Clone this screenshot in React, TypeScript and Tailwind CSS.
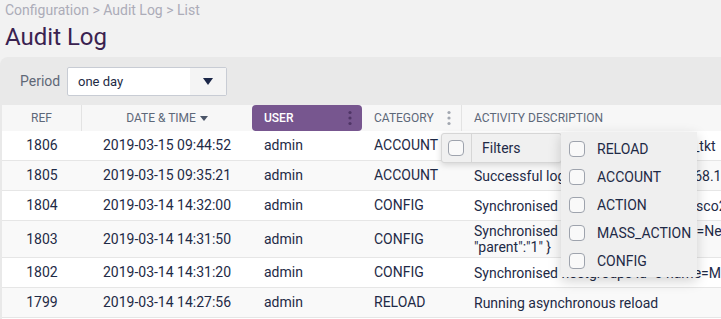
import React from "react";

const rows = [
    { ref: "1806", date: "2019-03-15 09:44:52", user: "admin", cat: "ACCOUNT", desc: ["Successful login for user admin vm_tkt"], h: "h-[30px]" },
    { ref: "1805", date: "2019-03-15 09:35:21", user: "admin", cat: "ACCOUNT", desc: ["Successful login for admin at 192.168.1.20"], h: "h-[30px]" },
    { ref: "1804", date: "2019-03-14 14:32:00", user: "admin", cat: "CONFIG", desc: ["Synchronised servers id=2 name=Cisco2"], h: "h-[30px]" },
    { ref: "1803", date: "2019-03-14 14:31:50", user: "admin", cat: "CONFIG", desc: ["Synchronised hostgroup id=4, name=New", "\"parent\":\"1\" }"], h: "h-[37px]" },
    { ref: "1802", date: "2019-03-14 14:31:20", user: "admin", cat: "CONFIG", desc: ["Synchronised hostgroups id=3 name=Main"], h: "h-[30px]" },
    { ref: "1799", date: "2019-03-14 14:27:56", user: "admin", cat: "RELOAD", desc: ["Running asynchronous reload"], h: "h-[30px]" },
];

const filterItems = ["RELOAD", "ACCOUNT", "ACTION", "MASS_ACTION", "CONFIG"];

function Kebab({ color }: { color: string }) {
    return (
        <svg width="4" height="16" viewBox="0 0 4 16" className={color}>
            <circle cx="2" cy="2.5" r="1.6" fill="currentColor" />
            <circle cx="2" cy="8" r="1.6" fill="currentColor" />
            <circle cx="2" cy="13.5" r="1.6" fill="currentColor" />
        </svg>
    );
}

function Box() {
    return <div className="w-[16px] h-[16px] rounded-[4px] border border-[#9ea3ad] bg-[#f9f9f9] shrink-0" />;
}

export default function App() {
    return (
        <div className="w-[721px] h-[319px] overflow-hidden bg-[#f2f2f2] font-['Roboto',sans-serif] relative">
            {/* Header */}
            <div className="pl-[5px] pt-[1px] text-[14px] leading-[18px] text-[#acacb8]">
                Configuration &gt; Audit Log &gt; List
            </div>
            <h1 className="pl-[5px] mt-[3px] text-[24px] leading-[30px] text-[#3a2250]">Audit Log</h1>

            {/* Panel */}
            <div className="mt-[5px] bg-[#e9e9e9] rounded-tl-[8px] h-[262px] flex flex-col">
                <div className="flex items-center h-[28px] mt-[10px] pl-[20px]">
                    <span className="text-[14px] text-[#5f6877] w-[47px]">Period</span>
                    <div className="flex w-[160px] h-[29px] border border-[#c8ccd4] rounded-[2px] bg-white">
                        <span className="flex-1 pl-[10px] text-[13px] text-[#1e2a44] leading-[27px]">one day</span>
                        <div className="w-[36px] bg-[#f4f4f4] flex items-center justify-center">
                            <svg width="10" height="7" viewBox="0 0 10 7"><path d="M0 0h10L5 7z" fill="#1b2748" /></svg>
                        </div>
                    </div>
                </div>

                {/* Table */}
                <div className="mt-[10px] ml-[2px] flex-1 bg-white overflow-hidden">
                    <div className="flex h-[26px] bg-[#f7f7f7] text-[12px] text-[#5d6879] uppercase">
                        <div className="w-[80px] shrink-0 border-r border-[#e3e3e3] flex items-center justify-center">REF</div>
                        <div className="w-[170px] shrink-0 flex items-center justify-center gap-[4px]">
                            DATE &amp; TIME
                            <svg width="8" height="5" viewBox="0 0 8 5"><path d="M0 0h8L4 5z" fill="#4b5568" /></svg>
                        </div>
                        <div className="w-[110px] shrink-0 bg-[#77568f] rounded-[4px] flex items-center justify-between pl-[12px] pr-[10px] text-white font-medium">
                            USER
                            <Kebab color="text-[#4f3566]" />
                        </div>
                        <div className="w-[100px] shrink-0 border-r border-[#e3e3e3] flex items-center justify-between pl-[12px] pr-[10px]">
                            CATEGORY
                            <Kebab color="text-[#a2a7b0]" />
                        </div>
                        <div className="flex-1 min-w-0 flex items-center pl-[12px] whitespace-nowrap">ACTIVITY DESCRIPTION</div>
                    </div>

                    {rows.map((r, i) => (
                        <div
                            key={r.ref}
                            className={`flex ${r.h} border-b border-[#e6e6e6] text-[14px] text-[#1e2a46] ${i % 2 ? "bg-[#f9f9f9]" : "bg-white"}`}
                        >
                            <div className="w-[80px] shrink-0 flex items-center justify-center">{r.ref}</div>
                            <div className="w-[170px] shrink-0 flex items-center justify-center">{r.date}</div>
                            <div className="w-[110px] shrink-0 flex items-center pl-[12px]">{r.user}</div>
                            <div className="w-[100px] shrink-0 flex items-center pl-[12px]">{r.cat}</div>
                            <div className="flex-1 min-w-0 flex flex-col justify-center pl-[12px] whitespace-nowrap leading-[16px]">
                                {r.desc.map(d => <span key={d}>{d}</span>)}
                            </div>
                        </div>
                    ))}
                </div>
            </div>

            {/* Filters bar */}
            <div className="absolute left-[441px] top-[133px] w-[121px] h-[30px] flex items-center bg-[#f0f0f0] border border-[#d6d6d6] rounded-[3px] shadow-[0_2px_6px_rgba(0,0,0,0.15)]">
                <div className="pl-[6px] pr-[7px] h-full flex items-center border-r border-[#d6d6d6]">
                    <Box />
                </div>
                <span className="pl-[10px] text-[14px] text-[#1e2a46]">Filters</span>
            </div>

            {/* Filters dropdown */}
            <div className="absolute left-[561px] top-[132px] w-[136px] h-[145px] bg-[#efefef] shadow-[0_4px_12px_rgba(0,0,0,0.18)] pt-[3px]">
                {filterItems.map(f => (
                    <div key={f} className="flex items-center h-[28px] pl-[8px] gap-[12px] text-[14px] text-[#1e2a46]">
                        <Box />
                        <span>{f}</span>
                    </div>
                ))}
            </div>
        </div>
    );
}
